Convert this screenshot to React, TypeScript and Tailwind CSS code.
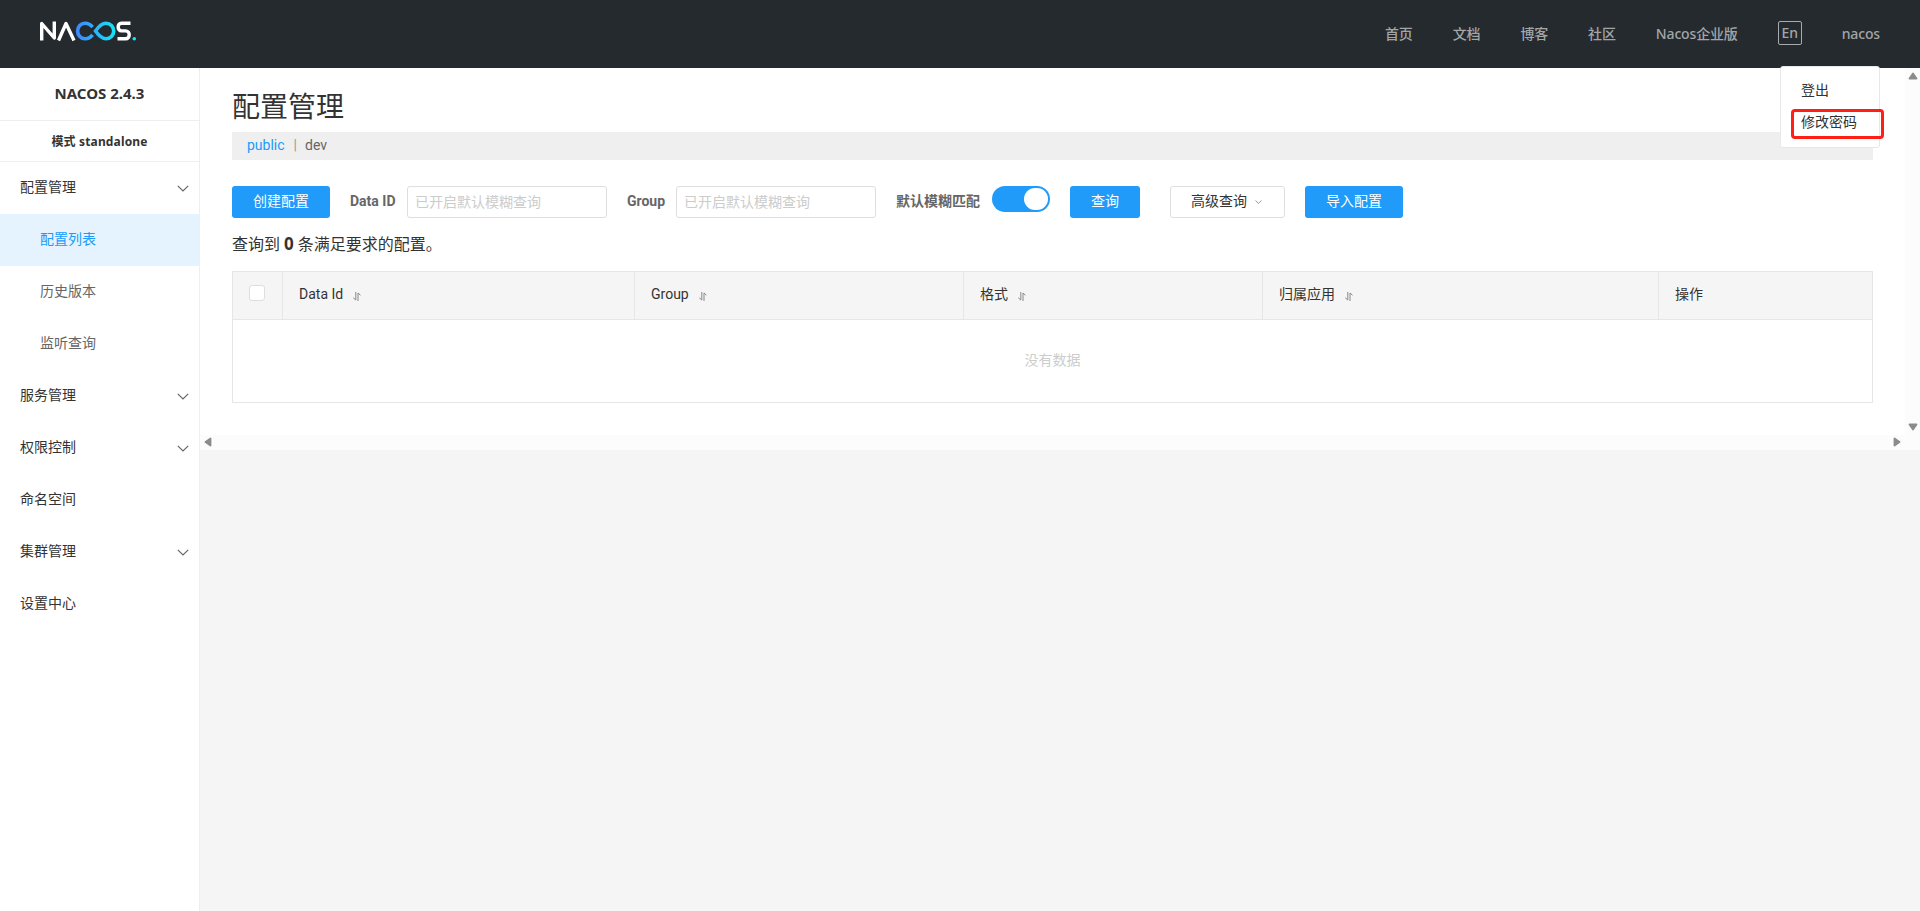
import { Fragment } from 'react';
import type { ReactNode } from 'react';

const NAV_LINKS = ['首页', '文档', '博客', '社区', 'Nacos企业版'];

type MenuItem = { label: string; expandable?: boolean; child?: boolean; active?: boolean };

const MENU: MenuItem[] = [
  { label: '配置管理', expandable: true },
  { label: '配置列表', child: true, active: true },
  { label: '历史版本', child: true },
  { label: '监听查询', child: true },
  { label: '服务管理', expandable: true },
  { label: '权限控制', expandable: true },
  { label: '命名空间' },
  { label: '集群管理', expandable: true },
  { label: '设置中心' },
];

const NAMESPACES = ['public', 'dev'];

export default function App() {
  return (
    <div className="flex h-[911px] w-[1920px] flex-col overflow-hidden bg-[#f5f5f5] font-[Roboto,'Noto_Sans_CJK_SC',sans-serif] text-sm text-[#333]">
      <Header />
      <div className="flex min-h-0 flex-1">
        <Sidebar />
        <ContentPane />
      </div>
    </div>
  );
}

function Header() {
  return (
    <header className="flex h-[68px] shrink-0 items-center justify-between bg-[#252a2f] px-10 font-['Noto_Sans','Noto_Sans_CJK_SC',sans-serif] text-[#a3a6a8]">
      <Logo />
      <nav className="flex items-center gap-10 text-sm leading-5 font-medium tracking-[-0.15px]">
        {NAV_LINKS.map((link) => (
          <a key={link}>{link}</a>
        ))}
        <span className="-mt-0.5 flex h-6 w-6 items-center justify-center rounded-xs border border-[#a8aaac]">En</span>
        <div className="relative">
          nacos
          <UserMenu />
        </div>
      </nav>
    </header>
  );
}

function UserMenu() {
  return (
    <div className="absolute top-[42px] right-0 z-10 h-[82px] w-[100px] rounded-[3px] border border-[#e6e7eb] bg-white pt-1.5 font-['Noto_Sans_CJK_SC',sans-serif] font-normal tracking-normal text-[#333]">
      <div className="h-8 pl-5 leading-8">登出</div>
      <div className="h-8 pl-5 leading-8">修改密码</div>
      <div className="absolute top-[42px] left-2.5 h-[30px] w-[93px] rounded-[4px] border-[3px] border-[#ff1f14]" />
    </div>
  );
}

function Logo() {
  return (
    <svg width="98" height="22" viewBox="0 0 98 22" fill="none" className="-mt-1.5">
      <defs>
        <linearGradient id="loop" x1="36" x2="76" y1="0" y2="0" gradientUnits="userSpaceOnUse">
          <stop stopColor="#3f86ff" />
          <stop offset="1" stopColor="#14e6f5" />
        </linearGradient>
      </defs>
      <g stroke="#fff" strokeWidth="3.4" strokeLinejoin="round">
        <path d="M1.700 20.500V3.500L14.300 18V1.500" />
        <path d="M18.500 20.500L26 3.500L34 20.500" />
        <path d="M90.500 3.200H81.500C77 3.200 77 10.900 81.500 10.900H85.500C90.500 10.900 90.500 18.800 85.500 18.800H77.500" />
      </g>
      <path
        d="M52.500 7.200C50.500 4.600 48 3.300 45 3.300C40.700 3.300 37.600 6.700 37.600 11C37.600 15.300 40.700 18.700 45 18.700C48 18.700 50.500 17.400 52.500 14.800"
        stroke="url(#loop)"
        strokeWidth="3.6"
      />
      <path
        d="M55.500 11C59 6 62 3.300 66 3.300C70.300 3.300 73.700 6.700 73.700 11C73.700 15.300 70.300 18.700 66 18.700C62 18.700 59 16 55.500 11Z"
        stroke="url(#loop)"
        strokeWidth="3.6"
      />
      <circle cx="94.300" cy="18.800" r="1.800" fill="#14e6f5" />
    </svg>
  );
}

function Sidebar() {
  return (
    <aside className="w-[200px] shrink-0 border-r border-[#eee] bg-white">
      <div className="h-[53px] border-b border-[#eee] text-center font-['Noto_Sans',sans-serif] text-[15px] leading-[50px] font-bold">
        NACOS 2.4.3
      </div>
      <div className="h-[41px] border-b border-[#eee] pt-px text-center font-['Noto_Sans','Noto_Sans_CJK_SC',sans-serif] text-xs leading-10 font-bold tracking-[0.15px]">
        模式 standalone
      </div>
      {MENU.map((item) => (
        <div
          key={item.label}
          className={`flex h-[52px] items-center justify-between pr-2.5 ${item.child ? 'pl-10' : 'pl-5'} ${
            item.active ? 'bg-[#e4f3fe] text-[#209bfa]' : item.child ? 'text-[#666]' : ''
          }`}
        >
          <span className="-mt-[3px]">{item.label}</span>
          {item.expandable && <Chevron className="h-[7px] w-3" />}
        </div>
      ))}
    </aside>
  );
}

function Chevron({ className }: { className: string }) {
  return (
    <svg viewBox="0 0 12 7" fill="none" stroke="#666" strokeWidth="1.2" className={className}>
      <path d="M0.800 0.800L6 6L11.200 0.800" />
    </svg>
  );
}

function ContentPane() {
  return (
    <main className="flex h-[382px] flex-1 flex-col bg-white">
      <div className="flex min-h-0 flex-1">
        <div className="w-[1705px] px-8">
          <h1 className="h-16 pt-5 text-[28px] leading-10">配置管理</h1>
          <div className="flex h-7 items-center bg-[#efefef] pb-0.5 pl-[15px] text-[#666]">
            {NAMESPACES.map((ns, i) => (
              <Fragment key={ns}>
                {i > 0 && <span className="mr-2 ml-[9px] text-[#999]">|</span>}
                <span className={i === 0 ? 'text-[#209bfa]' : ''}>{ns}</span>
              </Fragment>
            ))}
          </div>
          <SearchForm />
          <p className="mt-3 h-7 text-base leading-7">
            查询到 <b className="font-['Noto_Sans',sans-serif] text-[17px]">0</b> 条满足要求的配置。
          </p>
          <ConfigTable />
        </div>
        <div className="flex w-[15px] flex-col items-center justify-between bg-[#fcfcfc] pt-1 pb-1">
          <Arrow className="" />
          <Arrow className="rotate-180" />
        </div>
      </div>
      <div className="flex h-[15px] items-center justify-between bg-[#fcfcfc] pr-[18px] pb-px pl-[3px]">
        <Arrow className="-rotate-90" />
        <Arrow className="rotate-90" />
      </div>
    </main>
  );
}

function Arrow({ className }: { className: string }) {
  return (
    <svg width="10" height="8" viewBox="0 0 10 8" className={className}>
      <path d="M5 1.500L8.500 6.500H1.500Z" fill="#8b8b8b" stroke="#8b8b8b" strokeWidth="1.800" strokeLinejoin="round" />
    </svg>
  );
}

function SearchForm() {
  return (
    <div className="mt-[26px] flex h-8">
      <Button className="w-[98px]">创建配置</Button>
      <Label className="ml-5 w-[57px]">Data ID</Label>
      <SearchInput />
      <Label className="ml-5 w-[49px]">Group</Label>
      <SearchInput />
      <Label className="ml-5 w-24">默认模糊匹配</Label>
      <div className="flex h-[26px] w-[58px] justify-end rounded-full bg-[#209bfa] p-0.5">
        <div className="h-[22px] w-6 rounded-full bg-white" />
      </div>
      <Button className="ml-5 w-[70px]">查询</Button>
      <button className="ml-[30px] flex w-[115px] items-center rounded-[3px] border border-[#dedede] pb-0.5 pl-5">
        高级查询
        <Chevron className="mt-0.5 ml-2 h-1 w-[7px]" />
      </button>
      <Button className="ml-5 w-[98px]">导入配置</Button>
    </div>
  );
}

function Button({ className, children }: { className: string; children: ReactNode }) {
  return <button className={`rounded-[3px] bg-[#209bfa] pb-0.5 text-white ${className}`}>{children}</button>;
}

function Label({ className, children }: { className: string; children: ReactNode }) {
  return <label className={`leading-[30px] font-bold text-[#666] ${className}`}>{children}</label>;
}

function SearchInput() {
  return (
    <input
      placeholder="已开启默认模糊查询"
      className="w-[200px] rounded-[3px] border border-[#dedede] px-[7px] placeholder:text-[#ccc]"
    />
  );
}

function ConfigTable() {
  return (
    <div className="mt-[13px] h-[132px] border border-[#e6e6e6]">
      <div className="flex h-12 border-b border-[#e6e6e6] bg-[#f5f5f5]">
        <div className="w-[50px] border-r border-[#e6e6e6] pt-[13px] pl-4">
          <div className="h-4 w-4 rounded-[3px] border border-[#dedede] bg-white" />
        </div>
        <HeadCell className="w-[352px]">Data Id</HeadCell>
        <HeadCell className="w-[329px]">Group</HeadCell>
        <HeadCell className="w-[299px]">格式</HeadCell>
        <HeadCell className="w-[396px]">归属应用</HeadCell>
        <div className="pl-4 leading-[44px]">操作</div>
      </div>
      <div className="text-center leading-[80px] text-[#ccc]">没有数据</div>
    </div>
  );
}

function HeadCell({ className, children }: { className: string; children: ReactNode }) {
  return (
    <div className={`flex items-center border-r border-[#e6e6e6] pb-[3px] pl-4 ${className}`}>
      {children}
      <svg width="8" height="9" viewBox="0 0 8 9" fill="none" stroke="#888" className="mt-[5px] ml-2.5">
        <path d="M2.800 0V8L0.300 5.800M5 9V1L7.500 3.200" />
      </svg>
    </div>
  );
}
